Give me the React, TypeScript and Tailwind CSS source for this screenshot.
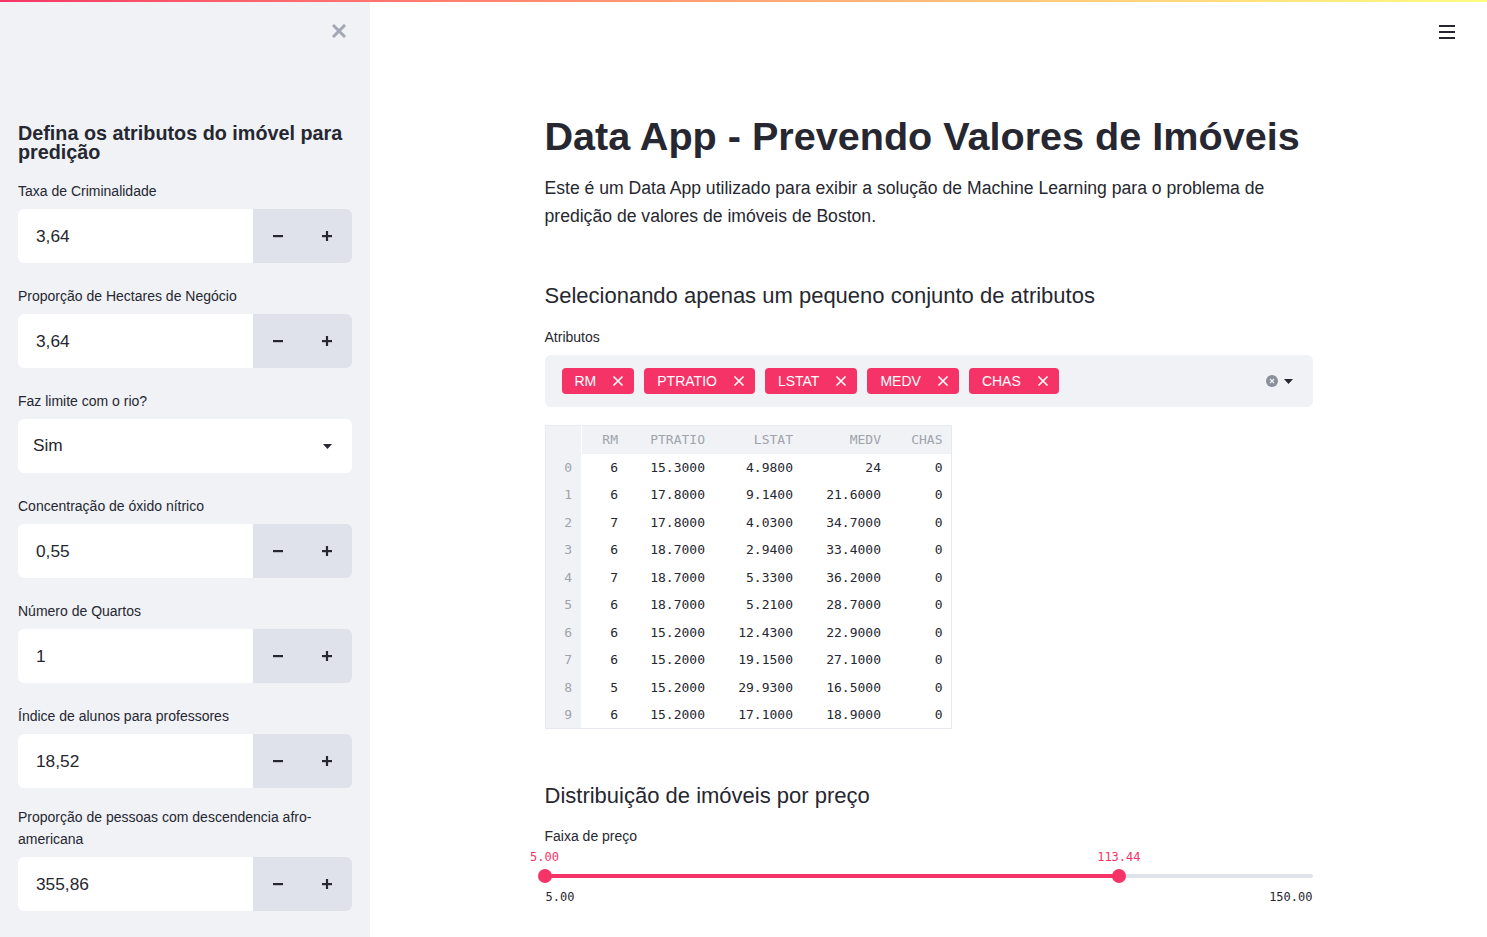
import { ReactNode } from 'react'

const FONT = { fontFamily: '"Liberation Sans", Arial, sans-serif' }
const MONO = { fontFamily: '"DejaVu Sans Mono", "Liberation Mono", monospace' }

interface FieldProps {
  label: ReactNode
  children: ReactNode
  tight?: boolean
}

function Field({ label, children, tight }: FieldProps) {
  return (
    <div className={tight ? 'mb-[18px]' : 'mb-[22px]'}>
      <div className="text-[14px] leading-[22px] text-[#262730] mb-[7px]">{label}</div>
      {children}
    </div>
  )
}

function NumberInput({ value }: { value: string }) {
  return (
    <div className="flex h-[54px] rounded-md overflow-hidden">
      <div className="flex-1 bg-white flex items-center pl-[18px] pt-[2px] text-[17.3px] text-[#262730]">{value}</div>
      <div className="w-[99px] bg-[#dfe2ea] flex">
        <button className="flex-1 flex items-center justify-center">
          <svg width="10" height="10" viewBox="0 0 10 10">
            <rect x="0" y="4" width="10" height="2.2" fill="#262730" />
          </svg>
        </button>
        <button className="flex-1 flex items-center justify-center">
          <svg width="10" height="10" viewBox="0 0 10 10">
            <rect x="0" y="4" width="10" height="2.2" fill="#262730" />
            <rect x="3.9" y="0" width="2.2" height="10" fill="#262730" />
          </svg>
        </button>
      </div>
    </div>
  )
}

function Sidebar() {
  return (
    <aside className="w-[370px] shrink-0 bg-[#f0f2f6] min-h-[937px] px-[18px]">
      <div className="flex justify-end h-[62px] pt-[24px] pr-[6px]">
        <svg width="14" height="14" viewBox="0 0 14 14">
          <path d="M2 2L12 12M12 2L2 12" stroke="#a3a8b4" strokeWidth="3" strokeLinecap="square" />
        </svg>
      </div>
      <h2 className="text-[19.8px] font-bold leading-[19px] text-[#262730] mt-[62px] mb-[18px]">
        Defina os atributos do imóvel para predição
      </h2>
      <Field label="Taxa de Criminalidade">
        <NumberInput value="3,64" />
      </Field>
      <Field label="Proporção de Hectares de Negócio">
        <NumberInput value="3,64" />
      </Field>
      <Field label="Faz limite com o rio?">
        <div className="flex h-[54px] rounded-md bg-white items-center pl-[15px] pr-[20px] justify-between">
          <span className="text-[17.3px] text-[#262730]">Sim</span>
          <svg width="9" height="5" viewBox="0 0 9 5">
            <path d="M0 0H9L4.5 5Z" fill="#262730" />
          </svg>
        </div>
      </Field>
      <Field label="Concentração de óxido nítrico">
        <NumberInput value="0,55" />
      </Field>
      <Field label="Número de Quartos">
        <NumberInput value="1" />
      </Field>
      <Field label="Índice de alunos para professores" tight>
        <NumberInput value="18,52" />
      </Field>
      <Field label="Proporção de pessoas com descendencia afro-americana">
        <NumberInput value="355,86" />
      </Field>
    </aside>
  )
}

const tags = ['RM', 'PTRATIO', 'LSTAT', 'MEDV', 'CHAS']

const rows = [
  ['6', '15.3000', '4.9800', '24', '0'],
  ['6', '17.8000', '9.1400', '21.6000', '0'],
  ['7', '17.8000', '4.0300', '34.7000', '0'],
  ['6', '18.7000', '2.9400', '33.4000', '0'],
  ['7', '18.7000', '5.3300', '36.2000', '0'],
  ['6', '18.7000', '5.2100', '28.7000', '0'],
  ['6', '15.2000', '12.4300', '22.9000', '0'],
  ['6', '15.2000', '19.1500', '27.1000', '0'],
  ['5', '15.2000', '29.9300', '16.5000', '0'],
  ['6', '15.2000', '17.1000', '18.9000', '0'],
]

const colWidths = ['w-[45px]', 'w-[87px]', 'w-[88px]', 'w-[88px]', 'w-[62px]']

function Multiselect() {
  return (
    <div className="h-[52px] rounded-md bg-[#f0f2f6] flex items-center pl-[17px] pr-[20px]">
      <div className="flex gap-[10px] flex-1">
        {tags.map((t) => (
          <div
            key={t}
            className="h-[26px] rounded-[4px] bg-[#f63366] text-white text-[14px] flex items-center pl-[13px] pr-[10px] gap-[16px]"
          >
            <span>{t}</span>
            <svg width="12" height="12" viewBox="0 0 12 12">
              <path d="M1.5 1.5L10.5 10.5M10.5 1.5L1.5 10.5" stroke="white" strokeWidth="1.6" />
            </svg>
          </div>
        ))}
      </div>
      <div className="flex items-center gap-[6px]">
        <svg width="12" height="12" viewBox="0 0 12 12">
          <circle cx="6" cy="6" r="6" fill="#8b8f9a" />
          <path d="M4 4L8 8M8 4L4 8" stroke="#f0f2f6" strokeWidth="1.2" />
        </svg>
        <svg width="9" height="5" viewBox="0 0 9 5">
          <path d="M0 0H9L4.5 5Z" fill="#262730" />
        </svg>
      </div>
    </div>
  )
}

function DataTable() {
  return (
    <table className="border border-[#e6e9ef] border-collapse text-[13px]" style={MONO}>
      <thead>
        <tr className="h-[28px] bg-[#f0f2f6] text-[#a0a3ab]">
          <th className="w-[36px] border-r border-white"></th>
          {['RM', 'PTRATIO', 'LSTAT', 'MEDV', 'CHAS'].map((h, i) => (
            <th key={h} className={`${colWidths[i]} text-right font-normal pr-[8px]`}>
              {h}
            </th>
          ))}
        </tr>
      </thead>
      <tbody>
        {rows.map((r, i) => (
          <tr key={i} className="h-[27.5px]">
            <td className="bg-[#f0f2f6] text-right pr-[9px] text-[#a0a3ab]">{i}</td>
            {r.map((c, j) => (
              <td key={j} className="text-right pr-[8px] text-[#262730]">
                {c}
              </td>
            ))}
          </tr>
        ))}
      </tbody>
    </table>
  )
}

function RangeSlider() {
  const min = 5
  const max = 150
  const lo = 5
  const hi = 113.44
  const loPct = ((lo - min) / (max - min)) * 100
  const hiPct = ((hi - min) / (max - min)) * 100
  return (
    <div className="relative h-[60px]" style={MONO}>
      <div
        className="absolute top-[3px] -translate-x-1/2 text-[12px] leading-[16px] text-[#f63366]"
        style={{ left: `${loPct}%` }}
      >
        5.00
      </div>
      <div
        className="absolute top-[3px] -translate-x-1/2 text-[12px] leading-[16px] text-[#f63366]"
        style={{ left: `${hiPct}%` }}
      >
        113.44
      </div>
      <div className="absolute left-0 right-0 top-[28px] h-[4px] rounded-full bg-[#dfe2ea]"></div>
      <div
        className="absolute top-[28px] h-[4px] bg-[#f63366]"
        style={{ left: `${loPct}%`, width: `${hiPct - loPct}%` }}
      ></div>
      <div
        className="absolute top-[23px] w-[14px] h-[14px] -ml-[7px] rounded-full bg-[#f63366]"
        style={{ left: `${loPct}%` }}
      ></div>
      <div
        className="absolute top-[23px] w-[14px] h-[14px] -ml-[7px] rounded-full bg-[#f63366]"
        style={{ left: `${hiPct}%` }}
      ></div>
      <div className="absolute left-0 right-0 top-[43px] flex justify-between text-[12px] leading-[16px] text-[#262730]">
        <span className="pl-[1px]">5.00</span>
        <span>150.00</span>
      </div>
    </div>
  )
}

export default function App() {
  return (
    <div className="relative flex min-h-[937px] bg-white" style={FONT}>
      <div className="absolute top-0 left-0 right-0 h-[2px] bg-gradient-to-r from-[#f63366] to-[#fffd80]"></div>
      <Sidebar />
      <main className="flex-1 flex flex-col">
        <div className="flex justify-end h-[64px] pt-[25px] pr-[32px]">
          <svg width="16" height="14" viewBox="0 0 16 14">
            <rect x="0" y="0" width="16" height="2" fill="#262730" />
            <rect x="0" y="6" width="16" height="2" fill="#262730" />
            <rect x="0" y="12" width="16" height="2" fill="#262730" />
          </svg>
        </div>
        <div className="w-[768px] mx-auto text-[#262730]">
          <h1 className="text-[39.6px] font-bold leading-[48px] mt-[48px]">
            Data App - Prevendo Valores de Imóveis
          </h1>
          <p className="text-[17.6px] leading-[28px] mt-[14px]">
            Este é um Data App utilizado para exibir a solução de Machine Learning para o problema de
            predição de valores de imóveis de Boston.
          </p>
          <h3 className="text-[22px] leading-[32px] mt-[50px]">
            Selecionando apenas um pequeno conjunto de atributos
          </h3>
          <div className="text-[14px] leading-[20px] mt-[15px] mb-[8px]">Atributos</div>
          <Multiselect />
          <div className="mt-[18px]">
            <DataTable />
          </div>
          <h3 className="text-[22px] leading-[32px] mt-[51px]">Distribuição de imóveis por preço</h3>
          <div className="text-[14px] leading-[20px] mt-[14px]">Faixa de preço</div>
          <RangeSlider />
        </div>
      </main>
    </div>
  )
}
